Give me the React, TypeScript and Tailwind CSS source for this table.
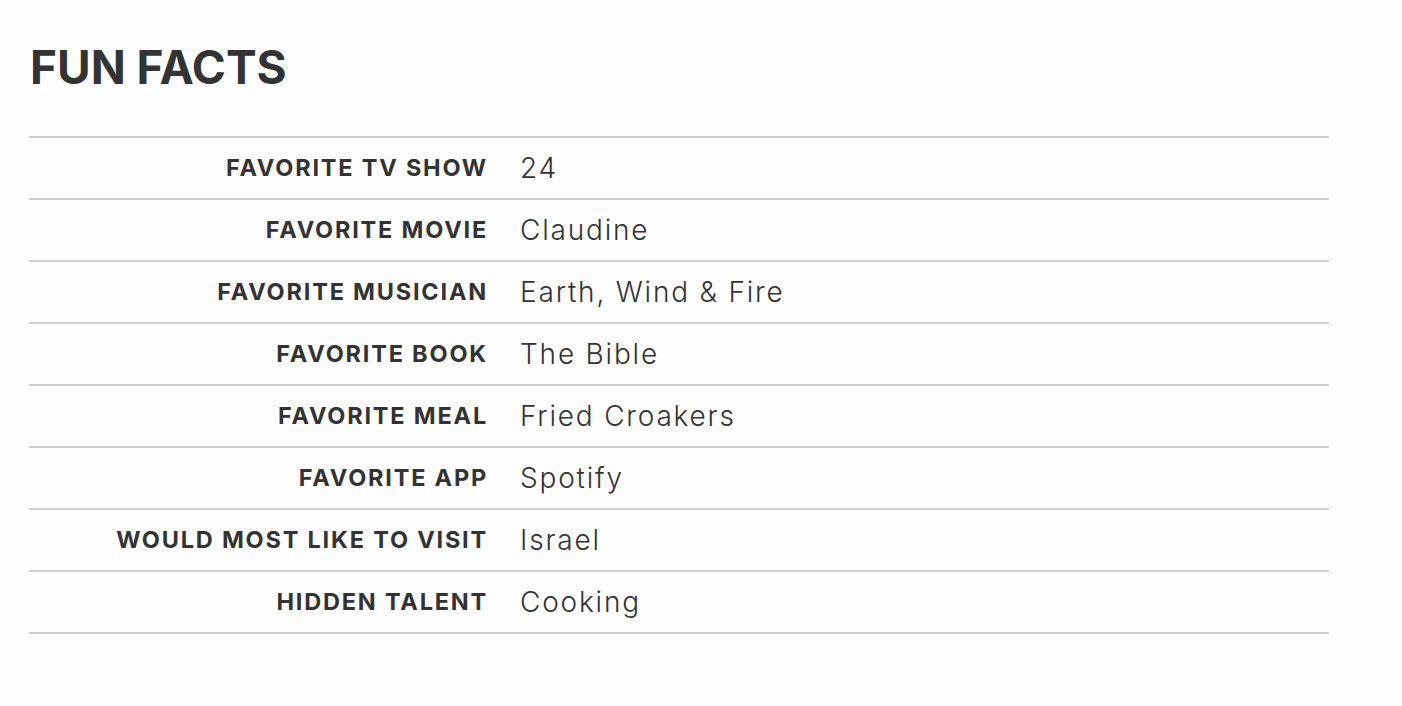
import React from "react";

const rows: [string, string][] = [
  ["FAVORITE TV SHOW", "24"],
  ["FAVORITE MOVIE", "Claudine"],
  ["FAVORITE MUSICIAN", "Earth, Wind & Fire"],
  ["FAVORITE BOOK", "The Bible"],
  ["FAVORITE MEAL", "Fried Croakers"],
  ["FAVORITE APP", "Spotify"],
  ["WOULD MOST LIKE TO VISIT", "Israel"],
  ["HIDDEN TALENT", "Cooking"],
];

export default function App() {
  return (
    <div className="min-h-[706px] w-full bg-[#fefefe] text-[#333333] font-['Inter',sans-serif]">
      <div className="w-[1300px] ml-[29px] pt-[38px]">
        <h2 className="text-[46px] font-bold leading-[58px] pl-[1px]">FUN FACTS</h2>
        <div className="mt-[40px] border-t-2 border-[#cccccc]">
          {rows.map(([k, v]) => (
            <div key={k} className="flex items-center h-[62px] border-b-2 border-[#cccccc]">
              <div className="w-[459px] text-right text-[23.5px] font-bold tracking-[1.8px] leading-none">{k}</div>
              <div className="pl-[32px] text-[28px] font-light tracking-[1.8px] leading-none">{v}</div>
            </div>
          ))}
        </div>
      </div>
    </div>
  );
}
